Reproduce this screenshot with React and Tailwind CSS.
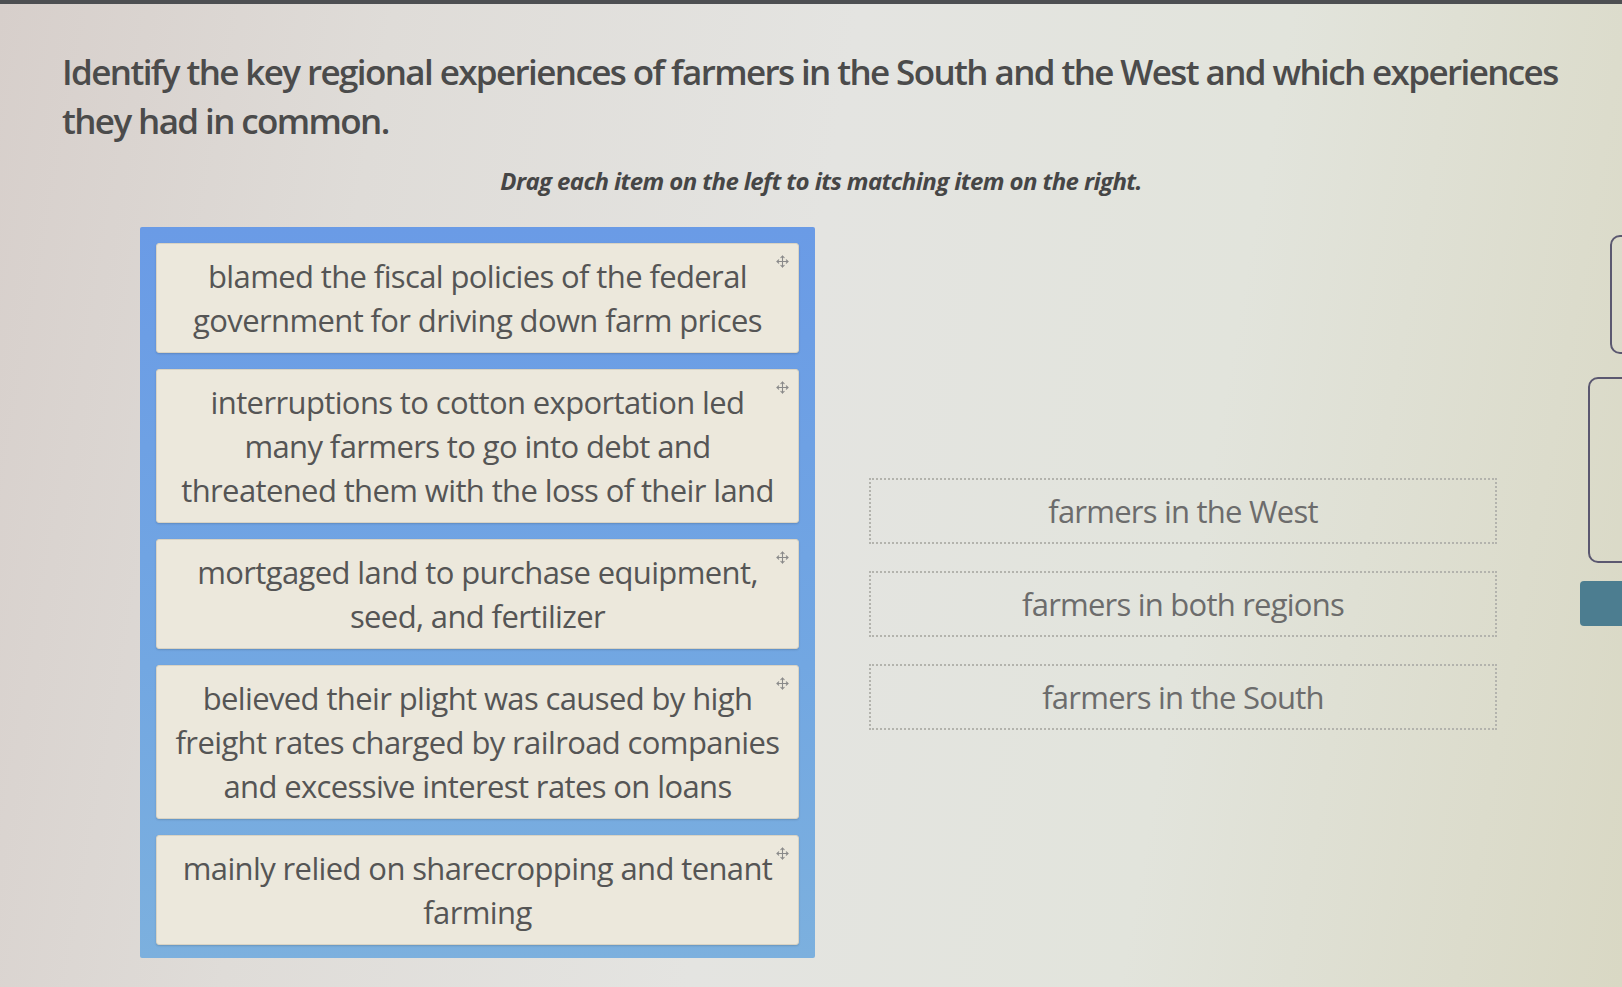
import React from "react";
import { Move } from "lucide-react";

const items = [
  ["blamed the fiscal policies of the federal", "government for driving down farm prices"],
  ["interruptions to cotton exportation led", "many farmers to go into debt and", "threatened them with the loss of their land"],
  ["mortgaged land to purchase equipment,", "seed, and fertilizer"],
  ["believed their plight was caused by high", "freight rates charged by railroad companies", "and excessive interest rates on loans"],
  ["mainly relied on sharecropping and tenant", "farming"],
];

const targets = ["farmers in the West", "farmers in both regions", "farmers in the South"];

function DragCard({ lines }) {
  return (
    <div className="relative rounded-[3px] border border-[#d9d3c3] bg-[#ece8dc] px-[12px] py-[10px] text-center shadow-[0_1px_2px_rgba(0,0,0,0.15)]">
      <Move className="absolute right-[9px] top-[11px] h-[13px] w-[13px] text-[#8a8a8a]" strokeWidth={2} />
      {lines.map((l, i) => (
        <div key={i} className="whitespace-nowrap text-[31px] leading-[44px] tracking-[-0.02em] text-[#555555]">
          {l}
        </div>
      ))}
    </div>
  );
}

function DropTarget({ label }) {
  return (
    <div className="flex h-[66px] items-center justify-center border-2 border-dotted border-[#b3b3ad] text-[31px] tracking-[-0.025em] text-[#6c6c6c]">
      {label}
    </div>
  );
}

export default function App() {
  return (
    <div
      className="relative h-[987px] w-[1622px] overflow-hidden bg-[linear-gradient(100deg,#d7cfcb_0%,#dfdcd8_22%,#e4e4e1_48%,#e2e4dc_72%,#d9d8c4_100%)]"
      style={{ fontFamily: '"Open Sans", "Noto Sans", sans-serif' }}
    >
      <div className="h-[4px] w-full bg-[#4d4f52]" />

      <div className="pl-[62px] pt-[43px]">
        <div className="text-[35px] font-semibold leading-[49px] tracking-[-0.046em] text-[#4b4b4b]">
          <div className="whitespace-nowrap">
            Identify the key regional experiences of farmers in the South and the West and which experiences
          </div>
          <div className="whitespace-nowrap">they had in common.</div>
        </div>
      </div>

      <div className="mt-[21px] flex w-[1580px] justify-center pl-[62px]">
        <div className="text-[24px] font-bold italic leading-[30px] tracking-[-0.025em] text-[#464646]">
          Drag each item on the left to its matching item on the right.
        </div>
      </div>

      <div className="mt-[31px] flex items-start pl-[140px]">
        <div className="flex w-[675px] flex-col gap-[16px] rounded-[2px] bg-[linear-gradient(180deg,#6a9be6_0%,#72a7e2_60%,#7cb0de_100%)] px-[16px] pb-[13px] pt-[16px]">
          {items.map((lines, i) => (
            <DragCard key={i} lines={lines} />
          ))}
        </div>

        <div className="ml-[54px] mt-[251px] flex w-[628px] flex-col gap-[27px]">
          {targets.map((t) => (
            <DropTarget key={t} label={t} />
          ))}
        </div>

        <div className="ml-[83px] flex w-[42px] flex-col overflow-hidden">
          <div className="ml-[30px] mt-[8px] h-[119px] w-[60px] rounded-[10px] border-2 border-[#5b5870]" />
          <div className="ml-[8px] mt-[23px] h-[186px] w-[60px] rounded-[10px] border-2 border-[#5b5870]" />
          <div className="mt-[18px] h-[45px] w-[60px] rounded-[4px] bg-[#4c7d90]" />
        </div>
      </div>
    </div>
  );
}
